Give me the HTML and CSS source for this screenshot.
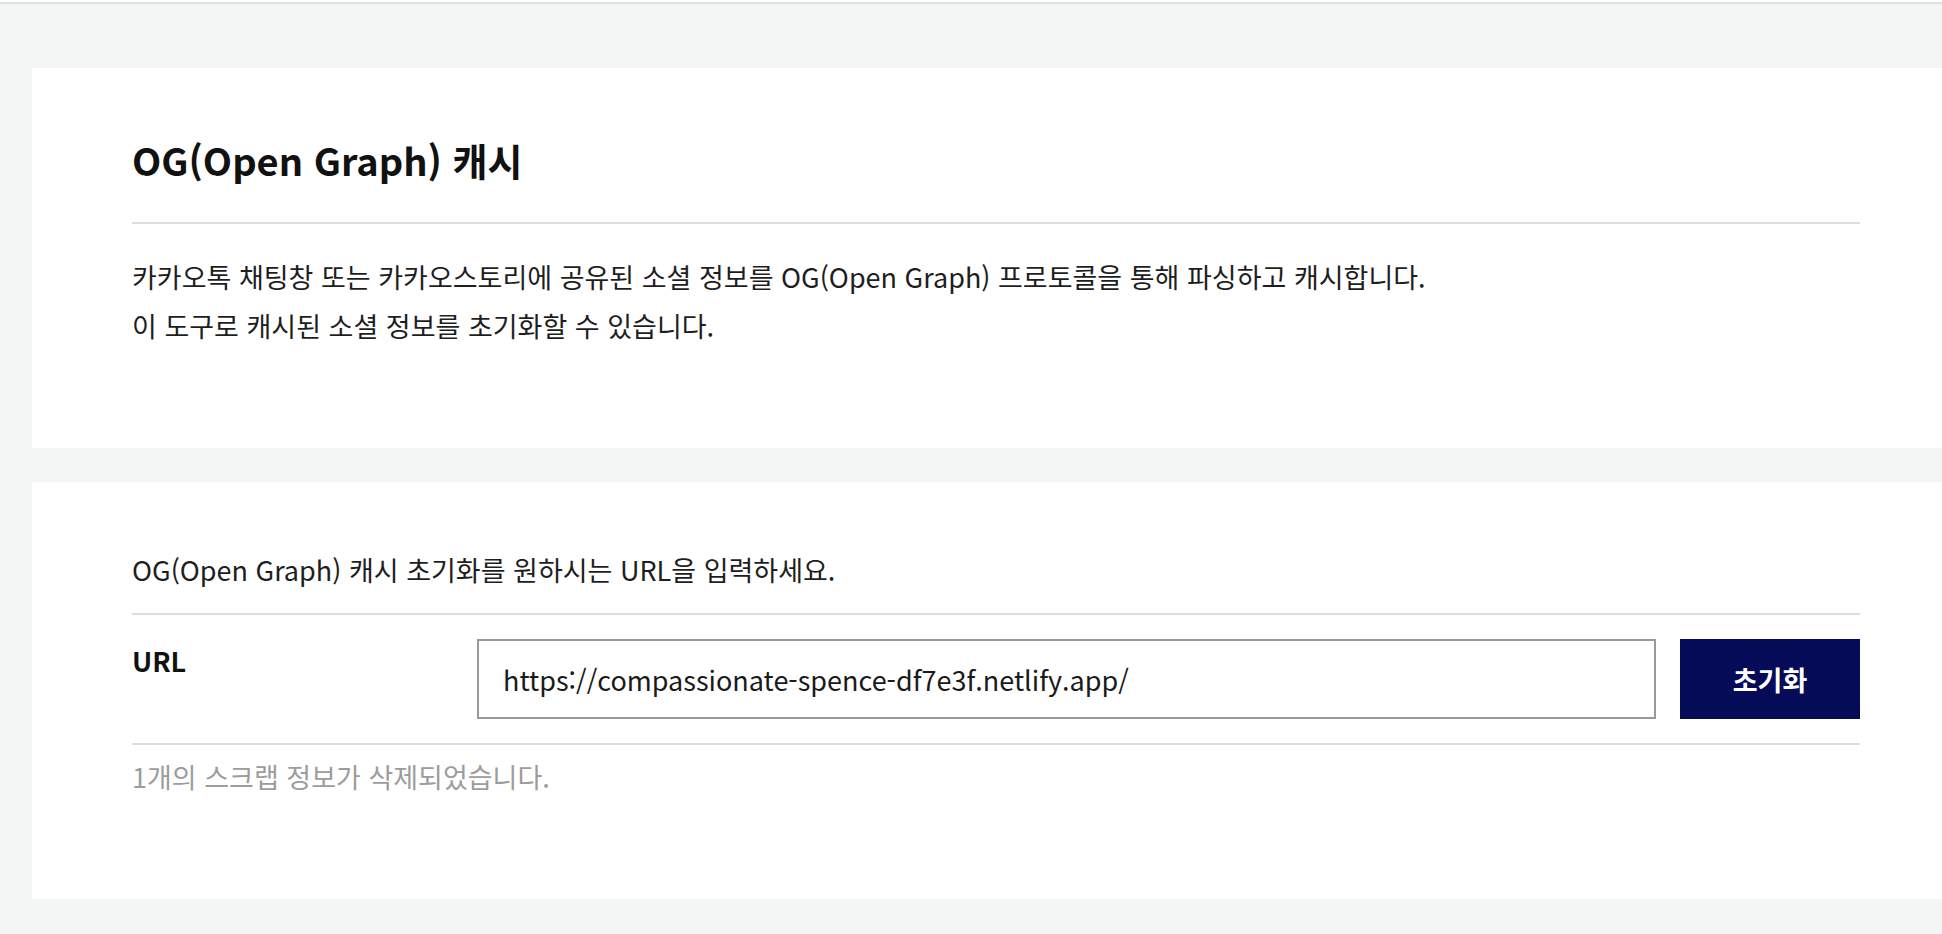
FILE: index.html
```html
<!DOCTYPE html>
<html lang="ko">
<head>
<meta charset="utf-8">
<title>OG(Open Graph) 캐시</title>
<link rel="stylesheet" href="styles.css">
</head>
<body>
<div class="topbar"></div>
<main class="page">
  <section class="card intro-card">
    <h1 class="title">OG(Open Graph) 캐시</h1>
    <p class="desc">카카오톡 채팅창 또는 카카오스토리에 공유된 소셜 정보를 OG(Open Graph) 프로토콜을 통해 파싱하고 캐시합니다.<br>이 도구로 캐시된 소셜 정보를 초기화할 수 있습니다.</p>
  </section>
  <section class="card form-card">
    <p class="lead">OG(Open Graph) 캐시 초기화를 원하시는 URL을 입력하세요.</p>
    <div class="url-row">
      <label class="url-label" for="url">URL</label>
      <input class="url-input" id="url" type="text" value="https://compassionate-spence-df7e3f.netlify.app/">
      <button class="reset-btn" type="button">초기화</button>
    </div>
    <p class="status">1개의 스크랩 정보가 삭제되었습니다.</p>
  </section>
</main>
</body>
</html>
```
FILE: styles.css
```css
* { box-sizing: border-box; }
html, body {
  margin: 0;
  padding: 0;
  background: #f4f6f5;
  font-family: "Noto Sans CJK KR", "Noto Sans", sans-serif;
  color: #1a1a1a;
}
.topbar {
  height: 4px;
  background: #ffffff;
  border-bottom: 2px solid #e0e0e0;
}
.page {
  padding-top: 64px;
  padding-left: 32px;
  display: flex;
  flex-direction: column;
  gap: 34px;
}
.card {
  background: #ffffff;
  padding-left: 100px;
  padding-right: 82px;
}
.intro-card {
  height: 380px;
  padding-top: 65px;
}
.title {
  margin: 0;
  font-size: 38px;
  line-height: 53px;
  font-weight: 700;
  color: #111;
  padding-bottom: 36px;
  border-bottom: 2px solid #dddddd;
}
.desc {
  margin: 28px 0 0;
  font-size: 27px;
  line-height: 49px;
  color: #1e1e1e;
}
.form-card {
  height: 417px;
  padding-top: 68px;
}
.lead {
  margin: 0;
  font-size: 27px;
  line-height: 39px;
  color: #1e1e1e;
  padding-bottom: 24px;
  border-bottom: 2px solid #dddddd;
}
.url-row {
  display: flex;
  align-items: flex-start;
  gap: 24px;
  padding: 24px 0;
  border-bottom: 2px solid #dddddd;
}
.url-label {
  width: 321px;
  flex: none;
  font-size: 27px;
  line-height: 39px;
  font-weight: 700;
  color: #111;
  padding-top: 2px;
}
.url-input {
  flex: 1;
  height: 80px;
  border: 2px solid #999999;
  padding: 0 24px;
  font-family: inherit;
  font-size: 27px;
  color: #1a1a1a;
  background: #fff;
  outline: none;
}
.reset-btn {
  flex: none;
  width: 180px;
  height: 80px;
  border: none;
  background: #050b56;
  color: #ffffff;
  font-family: inherit;
  font-size: 27px;
  font-weight: 700;
}
.status {
  margin: 12px 0 0;
  font-size: 27px;
  line-height: 39px;
  color: #9c9c9c;
}
```
